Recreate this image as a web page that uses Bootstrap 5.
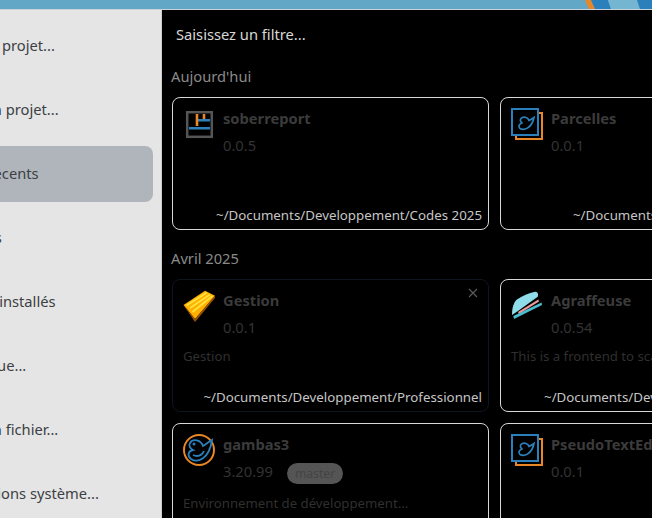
<!DOCTYPE html>
<html lang="fr">
<head>
<meta charset="utf-8">
<link href="https://cdn.jsdelivr.net/npm/bootstrap@5.3.0/dist/css/bootstrap.min.css" rel="stylesheet">
<style>
html,body{height:518px;width:652px;overflow:hidden;background:#000;}
body{font-family:"Noto Sans","Open Sans",sans-serif;font-size:14.7px;line-height:19px;}
.topband{height:10px;background:#62a8c6;border-bottom:1px solid #c9d3d8;overflow:hidden;}
.topband svg{display:block;margin-left:auto;}
.shell{height:508px;}
.sidebar{width:162px;flex:none;background:#e5e5e5;overflow:hidden;padding-top:8px;border-right:1px solid #cfcfcf;}
.side-item{height:56px;margin:0 8px 8px -64px;padding-bottom:2px;border-radius:8px;color:#3c4043;display:flex;align-items:center;white-space:nowrap;}
.side-item.sel{background:#b0b5bb;}
.content{flex:1 1 auto;min-width:0;overflow:hidden;padding-left:9px;}
.filter{color:#d8d8d8;padding:15px 0 0 5px;height:57px;}
.grp{color:#8a8a8a;margin:0;height:19px;}
.grp.later{margin-top:19px;}
.cardrow{display:flex;gap:11px;margin:11px 0 0 1px;width:800px;}
.pcard{width:317px;height:133px;flex:none;background:#000;border:1px solid #d8d8d8;border-radius:8px;position:relative;overflow:hidden;padding:10px;}
.pcard.dim{border-color:#0e1420;}
.ico{width:32px;height:32px;flex:none;margin-right:8px;display:block;}
.pname{color:#3b3b3b;font-weight:700;line-height:22px;margin-top:-1px;}
.pver{color:#333;line-height:19px;margin-top:7px;white-space:nowrap;}
.pdesc{color:#2f2f2f;font-size:13.2px;margin-top:10px;white-space:nowrap;}
.ppath{color:#c6c6c6;font-size:13.3px;white-space:nowrap;position:absolute;right:6px;bottom:4px;}
.tagchip{display:inline-block;background:#555;color:#444;border-radius:11px;height:21px;line-height:21px;padding:0 8px;margin-left:14px;font-size:12.2px;vertical-align:middle;}
.closer{position:absolute;right:10px;top:8px;display:block;}
</style>
</head>
<body>
<div class="topband">
<svg width="80" height="9" viewBox="0 0 80 9"><path d="M13 0H19L23 9H17Z" fill="#e98625"/><path d="M19 0H36L39 9H23Z" fill="#2b80bb"/><path d="M36 0H65L68 9H39Z" fill="#74b5d1"/><path d="M65 0H80V9H68Z" fill="#2b80bb"/></svg>
</div>
<div class="d-flex shell">
<nav class="sidebar">
<div class="side-item">Nouveau projet...</div>
<div class="side-item">Ouvrir un projet...</div>
<div class="side-item sel">Projets récents</div>
<div class="side-item">Exemples</div>
<div class="side-item">Logiciels installés</div>
<div class="side-item">Logithèque...</div>
<div class="side-item">Ouvrir un fichier...</div>
<div class="side-item">Informations système...</div>
</nav>
<main class="content">
<div class="filter">Saisissez un filtre...</div>
<p class="grp">Aujourd'hui</p>
<div class="cardrow">
<div class="pcard"><div class="d-flex">
<svg class="ico" viewBox="0 0 32 32"><rect x="4.2" y="4.2" width="24.6" height="24.6" fill="none" stroke="#555" stroke-width="2.5"/><path d="M6 20.2h21" stroke="#2b80bb" stroke-width="2.5"/><path d="M14 12.2h13" stroke="#2b80bb" stroke-width="2.5"/><path d="M14 6v12" stroke="#e98625" stroke-width="2.6"/><path d="M21 6v5" stroke="#e98625" stroke-width="2.6"/></svg>
<div><div class="pname">soberreport</div><div class="pver">0.0.5</div></div></div>
<div class="ppath">~/Documents/Developpement/Codes 2025</div></div>
<div class="pcard"><div class="d-flex">
<svg class="ico" viewBox="0 0 32 32"><path d="M5 28V31H31V5H28" fill="none" stroke="#e98625" stroke-width="2"/><rect x="1" y="1" width="26" height="26" fill="#000" stroke="#2b80bb" stroke-width="2"/><path d="M23 9.5C20.500 11 19.500 12 18 12.500 17 9 12 8 10 10.500 8.500 12.500 10 14.500 11.500 15 8 15.500 7 19 9 20.500 13 23 21 20 23 9.500Z" fill="none" stroke="#2b80bb" stroke-width="1.700"/></svg>
<div><div class="pname">Parcelles</div><div class="pver">0.0.1</div></div></div>
<div class="ppath">~/Documents/Developpement/Codes/</div></div>
</div>
<p class="grp later">Avril 2025</p>
<div class="cardrow">
<div class="pcard dim"><svg class="closer" width="10" height="10" viewBox="0 0 10 10"><path d="M1 1L9 9M9 1L1 9" stroke="#5c5c5c" stroke-width="1.100"/></svg><div class="d-flex">
<svg class="ico" viewBox="0 0 32 32"><path d="M0.500 15L22 0.700 32 5.700 12 29Z" fill="#ffb000"/><path d="M3.500 15.500L24 2.500M7 18L27 4.500M9.500 22L29.500 6" stroke="#ffe23c" stroke-width="1.800"/><path d="M0.500 15L12 29 32 5.700V8L12 32Z" fill="#9a5200"/></svg>
<div><div class="pname">Gestion</div><div class="pver">0.0.1</div></div></div>
<div class="pdesc">Gestion</div>
<div class="ppath">~/Documents/Developpement/Professionnel</div></div>
<div class="pcard"><div class="d-flex">
<svg class="ico" viewBox="0 0 32 32"><path d="M1 25C1 17 3 12 6 9.500 11 6 18 3 24 1.700 27 1.500 27.500 4.500 26.700 6.700L7 21Z" fill="#8fdde8"/><path d="M7 22L27.300 9.500 28 11.500 8 24Z" fill="#f29a9a"/><path d="M2.300 26L3 29 31 15 30.500 12.500Z" fill="#4bbdd0"/></svg>
<div><div class="pname">Agraffeuse</div><div class="pver">0.0.54</div></div></div>
<div class="pdesc">This is a frontend to scan documents</div>
<div class="ppath">~/Documents/Developpement/Codes 2025</div></div>
</div>
<div class="cardrow">
<div class="pcard"><div class="d-flex">
<svg class="ico" viewBox="0 0 32 32"><circle cx="16" cy="16" r="15" fill="none" stroke="#e98625" stroke-width="2"/><path d="M29 6C24 9 22 11 20 12 18 6 10 4 7 9 5 12 8 15 10 16 5 17 4 22 8 25 14 29 26 26 29 6Z" fill="none" stroke="#2b80bb" stroke-width="1.800"/><path d="M10 21C14 23 19 22 21 17" fill="none" stroke="#2b80bb" stroke-width="1.800"/><circle cx="11" cy="10" r="1.500" fill="#2b80bb"/></svg>
<div><div class="pname">gambas3</div><div class="pver">3.20.99<span class="tagchip">master</span></div></div></div>
<div class="pdesc">Environnement de développement...</div></div>
<div class="pcard"><div class="d-flex">
<svg class="ico" viewBox="0 0 32 32"><path d="M5 28V31H31V5H28" fill="none" stroke="#e98625" stroke-width="2"/><rect x="1" y="1" width="26" height="26" fill="#000" stroke="#2b80bb" stroke-width="2"/><path d="M23 9.5C20.500 11 19.500 12 18 12.500 17 9 12 8 10 10.500 8.500 12.500 10 14.500 11.500 15 8 15.500 7 19 9 20.500 13 23 21 20 23 9.500Z" fill="none" stroke="#2b80bb" stroke-width="1.700"/></svg>
<div><div class="pname">PseudoTextEditor</div><div class="pver">0.0.1</div></div></div></div>
</div>
</main>
</div>
</body>
</html>
